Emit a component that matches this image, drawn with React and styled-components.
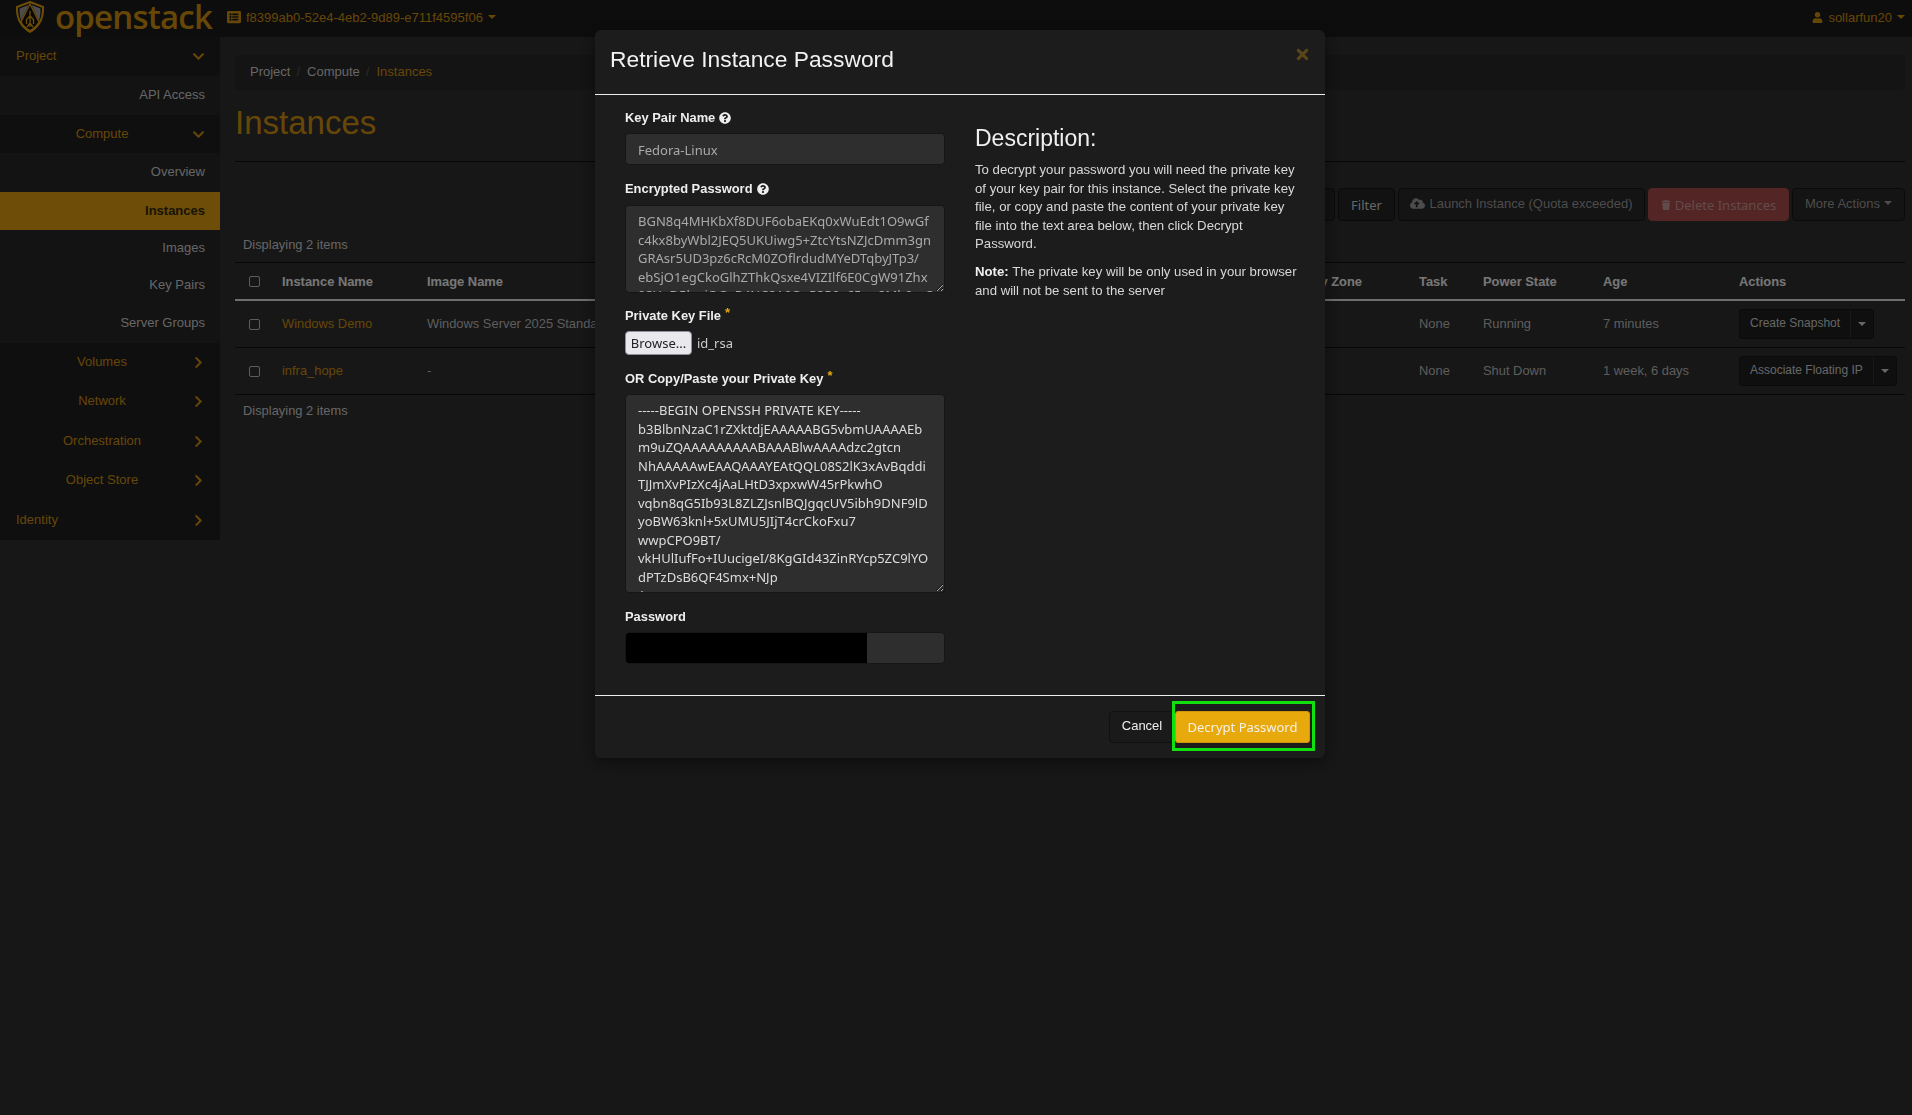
import React from "react";
import styled, { createGlobalStyle } from "styled-components";
import {
  FaChevronDown,
  FaChevronRight,
  FaCloudUploadAlt,
  FaListAlt,
  FaQuestionCircle,
  FaTimes,
  FaTrash,
  FaUser,
} from "react-icons/fa";

const GOLD = "#dc9a10";
const GOLD_TEXT = "#cc8e10";
const COLUMNS = "39px 145px 220px 140px 130px 130px 213px 159px 64px 120px 136px 174px";
const SANS = `"Liberation Sans", Arial, sans-serif`;
const NOTO = `"Noto Sans", "Open Sans", sans-serif`;

const GlobalStyle = createGlobalStyle`
  html, body {
    margin: 0;
    padding: 0;
    height: 100%;
    overflow: hidden;
    background: #2e2e2e;
    font-family: ${SANS};
    font-size: 13px;
  }
  * { box-sizing: border-box; }
`;

const Page = styled.div`
  min-height: 1115px;
  background: #2e2e2e;
  color: #ccc;
`;

const TopBar = styled.header`
  height: 37px;
  background: #1a1a1a;
  display: flex;
  align-items: center;
  padding: 0 7px 3px 0;
`;

const Brand = styled.div`
  width: 225px;
  height: 37px;
  display: flex;
  align-items: center;
  padding-left: 15px;
  gap: 10px;
`;

const BrandName = styled.span`
  font-family: "Open Sans", ${NOTO};
  font-weight: 600;
  font-size: 33px;
  line-height: 37px;
  letter-spacing: -0.8px;
  color: ${GOLD_TEXT};
  position: relative;
  top: -1px;
`;

const NavMenu = styled.div`
  display: flex;
  align-items: center;
  gap: 5px;
  color: ${GOLD_TEXT};
  font-size: 13px;
  margin-left: ${(p) => (p.$end ? "auto" : "2px")};
`;

const Caret = styled.span`
  display: inline-block;
  width: 0;
  height: 0;
  border-top: 4px solid currentColor;
  border-left: 4px solid transparent;
  border-right: 4px solid transparent;
`;

const Layout = styled.div`
  display: flex;
  align-items: flex-start;
`;

const Sidebar = styled.nav`
  width: 220px;
  flex: none;
  background: #1e1e1e;
`;

const NavRow = styled.div`
  height: ${(p) => p.$h || 39}px;
  display: flex;
  align-items: center;
  padding: 0 15px 0 16px;
  background: ${(p) => (p.$active ? GOLD : p.$sub ? "#262626" : "#1e1e1e")};
  color: ${(p) => (p.$active ? "#33280d" : p.$sub ? "#ccc" : GOLD_TEXT)};
  font-weight: ${(p) => (p.$active ? 700 : 400)};
  justify-content: ${(p) => (p.$sub ? "flex-end" : "space-between")};
  font-size: 13px;
`;

const NavLabel = styled.span`
  flex: ${(p) => (p.$center ? 1 : "none")};
  text-align: ${(p) => (p.$center ? "center" : "left")};
  padding-right: ${(p) => (p.$center ? 4 : 0)}px;
  position: relative;
  top: -1px;
`;

const Chevron = styled.span`
  display: flex;
  font-size: 13px;
`;

const Main = styled.main`
  flex: 1;
  min-width: 0;
  padding: 18px 7px 0 15px;
`;

const Breadcrumb = styled.ol`
  list-style: none;
  margin: 0;
  height: 35px;
  padding: 0 0 2px 15px;
  display: flex;
  align-items: center;
  background: #282828;
  border-radius: 4px;
`;

const Crumb = styled.li`
  color: ${(p) => (p.$current ? GOLD_TEXT : "#ccc")};
  margin-right: 7px;
  &:not(:last-child)::after {
    content: "/";
    color: #555;
    margin-left: 6px;
  }
`;

const PageHeader = styled.div`
  height: 72px;
  border-bottom: 1px solid #0e0e0e;
  padding-top: 13px;
`;

const PageTitle = styled.h1`
  margin: 0;
  font-weight: 400;
  font-size: 33px;
  line-height: 39px;
  color: ${GOLD_TEXT};
`;

const Toolbar = styled.div`
  height: 70px;
  padding-top: 26px;
  display: flex;
  justify-content: flex-end;
  gap: 3px;
`;

const ToolButton = styled.div`
  height: 33px;
  width: ${(p) => p.$w}px;
  display: flex;
  align-items: center;
  justify-content: center;
  gap: 4px;
  padding-bottom: ${(p) => (p.$noto ? 0 : 3)}px;
  border: 1px solid ${(p) => (p.$danger ? "#a84646" : "#141414")};
  border-radius: 4px;
  background: ${(p) => (p.$danger ? "#a84a4a" : p.$ghost ? "#282828" : "#242424")};
  color: ${(p) => (p.$danger ? "#c49696" : p.$ghost ? "#999" : "#ccc")};
  font-family: ${(p) => (p.$noto ? NOTO : SANS)};
  font-size: 13px;
`;

const CountRow = styled.div`
  height: 31px;
  padding: 0 0 6px 8px;
  display: flex;
  align-items: center;
  border-bottom: 1px solid #0e0e0e;
  color: #ccc;
  font-size: 12.9px;
`;

const FootCount = styled(CountRow)`
  padding-bottom: 0;
  border-bottom: 0;
`;

const Row = styled.div`
  display: grid;
  grid-template-columns: ${COLUMNS};
  align-items: center;
  height: ${(p) => (p.$head ? 38 : 47)}px;
  border-bottom: ${(p) => (p.$head ? "2px solid #ddd" : "1px solid #0e0e0e")};
`;

const Cell = styled.div`
  padding: 0 0 1px 8px;
  white-space: nowrap;
  overflow: hidden;
  color: ${(p) => (p.$link ? GOLD_TEXT : "#bbb")};
  font-size: 12.9px;
`;

const HeadCell = styled(Cell)`
  color: #eee;
  font-weight: 700;
  padding-bottom: 0;
`;

const CheckCell = styled.div`
  padding-left: 14px;
  display: flex;
`;

const Check = styled.span`
  width: 11px;
  height: 11px;
  border: 1px solid #bbb;
  border-radius: 2px;
  background: #2e2e2e;
`;

const SplitButton = styled.div`
  display: inline-flex;
  height: 30px;
  border: 1px solid #161616;
  border-radius: 3px;
  background: #1f1f1f;
  color: #ccc;
  font-size: 12px;
`;

const SplitLabel = styled.span`
  padding: 0 10px 2px;
  display: flex;
  align-items: center;
  border-right: 1px solid #333;
`;

const SplitCaret = styled.span`
  width: 22px;
  display: flex;
  align-items: center;
  justify-content: center;
`;

const Backdrop = styled.div`
  position: fixed;
  inset: 0;
  background: rgba(0, 0, 0, 0.5);
`;

const Modal = styled.section`
  position: absolute;
  top: 30px;
  left: 595px;
  width: 730px;
  background: #1c1c1c;
  border-radius: 6px;
  box-shadow: 0 4px 14px rgba(0, 0, 0, 0.45);
  color: #e6e6e6;
`;

const ModalHeader = styled.div`
  height: 65px;
  border-bottom: 1px solid #eee;
  padding: 15px 14px 0 15px;
  display: flex;
  justify-content: space-between;
`;

const ModalTitle = styled.h4`
  margin: 0;
  font-weight: 400;
  font-size: 22.8px;
  line-height: 28px;
  color: #f2f2f2;
`;

const CloseIcon = styled.span`
  display: flex;
  color: #5a4519;
  font-size: 17px;
  height: 20px;
  margin-top: 1px;
`;

const ModalBody = styled.div`
  height: 601px;
  display: flex;
  gap: 30px;
  padding: 13px 0 0 30px;
  border-bottom: 1px solid #eee;
`;

const FormColumn = styled.div`
  width: 320px;
  flex: none;
`;

const Field = styled.div`
  margin-bottom: ${(p) => p.$mb || 14}px;
`;

const Label = styled.label`
  display: flex;
  align-items: center;
  gap: 4px;
  height: 19px;
  margin-bottom: ${(p) => p.$mb || 6}px;
  font-weight: 700;
  font-size: 12.9px;
  color: #eee;
`;

const Required = styled.span`
  color: #e6a90c;
  font-size: 13px;
  line-height: 13px;
  position: relative;
  top: -3px;
`;

const HelpIcon = styled.span`
  display: flex;
  font-size: 12px;
  color: #eee;
`;

const TextInput = styled.input`
  display: block;
  width: 100%;
  height: 32px;
  padding: 2px 12px 0;
  background: #2e2e2e;
  border: 1px solid #161616;
  border-radius: 4px;
  color: #aaa;
  font-family: ${NOTO};
  font-size: 13px;
  outline: 0;
`;

const TextArea = styled.textarea`
  display: block;
  width: 100%;
  height: ${(p) => p.$h}px;
  padding: 6px 12px;
  background: #2e2e2e;
  border: 1px solid #161616;
  border-radius: 4px;
  color: ${(p) => (p.$muted ? "#aaa" : "#ddd")};
  font-family: ${NOTO};
  font-size: 13px;
  line-height: 18.5px;
  overflow: hidden;
  white-space: pre;
  outline: 0;
`;

const FileRow = styled.div`
  display: flex;
  align-items: center;
  gap: 5px;
  height: 24px;
  font-family: ${NOTO};
  font-size: 13px;
  color: #ccc;
`;

const BrowseButton = styled.button`
  width: 67px;
  height: 24px;
  padding: 0;
  background: #e9e9ed;
  border: 1px solid #8f8f9d;
  border-radius: 4px;
  color: #222;
  font-family: ${NOTO};
  font-size: 13px;
`;

const PasswordBox = styled.div`
  display: flex;
  height: 32px;
  background: #2e2e2e;
  border: 1px solid #161616;
  border-radius: 4px;
  overflow: hidden;
`;

const Redaction = styled.div`
  width: 241px;
  background: #000;
`;

const Description = styled.div`
  width: 322px;
  padding-top: 17px;
`;

const DescTitle = styled.h3`
  margin: 0 0 10px;
  font-weight: 400;
  font-size: 23px;
  line-height: 26px;
  color: #f0f0f0;
`;

const DescText = styled.p`
  margin: 0 0 9px;
  font-size: 13.2px;
  line-height: 18.6px;
  color: #d8d8d8;
  b { color: #f0f0f0; }
`;

const ModalFooter = styled.div`
  height: 62px;
  padding: 5px 10px 6px 0;
  display: flex;
  justify-content: flex-end;
  align-items: flex-start;
`;

const CancelButton = styled.button`
  width: 66px;
  height: 32px;
  margin-top: 10px;
  padding: 0 0 4px;
  background: #1a1a1a;
  border: 1px solid #111;
  border-radius: 4px;
  color: #eee;
  font-family: ${SANS};
  font-size: 13px;
`;

// green box drawn round the button in the screenshot
const Highlight = styled.div`
  margin-left: -3px;
  height: 50px;
  border: 3px solid #10e010;
  padding: 7px 2px 5px 0;
`;

const DecryptButton = styled.button`
  display: block;
  width: 135px;
  height: 32px;
  padding: 0;
  background: #e8a90c;
  border: 1px solid #cf960a;
  border-radius: 3px;
  color: #f5f1e4;
  font-family: ${NOTO};
  font-size: 13px;
`;

const navItems = [
  { label: "Project", open: true },
  { label: "API Access", sub: true },
  { label: "Compute", open: true, center: true, h: 38 },
  { label: "Overview", sub: true, h: 39 },
  { label: "Instances", sub: true, active: true, h: 38 },
  { label: "Images", sub: true, h: 37 },
  { label: "Key Pairs", sub: true, h: 37 },
  { label: "Server Groups", sub: true, h: 39 },
  { label: "Volumes", center: true },
  { label: "Network", center: true },
  { label: "Orchestration", center: true, h: 40 },
  { label: "Object Store", center: true, h: 39 },
  { label: "Identity", h: 40 },
];

const encrypted = `BGN8q4MHKbXf8DUF6obaEKq0xWuEdt1O9wGf
c4kx8byWbl2JEQ5UKUiwg5+ZtcYtsNZJcDmm3gn
GRAsr5UD3pz6cRcM0ZOflrdudMYeDTqbyJTp3/
ebSjO1egCkoGlhZThkQsxe4VIZIlf6E0CgW91Zhx
0SU+D5bwjOG+R4NC8A9O+P3P0x65sw8Mb0xx3`;

const privateKey = `-----BEGIN OPENSSH PRIVATE KEY-----
b3BlbnNzaC1rZXktdjEAAAAABG5vbmUAAAAEb
m9uZQAAAAAAAAABAAABlwAAAAdzc2gtcn
NhAAAAAwEAAQAAAYEAtQQL08S2lK3xAvBqddi
TJJmXvPIzXc4jAaLHtD3xpxwW45rPkwhO
vqbn8qG5Ib93L8ZLZJsnlBQJgqcUV5ibh9DNF9lD
yoBW63knl+5xUMU5JIjT4crCkoFxu7
wwpCPO9BT/
vkHUlIufFo+IUucigeI/8KgGId43ZinRYcp5ZC9lYO
dPTzDsB6QF4Smx+NJp
/`;

const headers = [
  "Instance Name",
  "Image Name",
  "IP Address",
  "Flavor",
  "Key Pair",
  "Status",
  "Availability Zone",
  "Task",
  "Power State",
  "Age",
  "Actions",
];

const instances = [
  {
    name: "Windows Demo",
    image: "Windows Server 2025 Standard",
    power: "Running",
    age: "7 minutes",
    action: "Create Snapshot",
  },
  {
    name: "infra_hope",
    image: "-",
    power: "Shut Down",
    age: "1 week, 6 days",
    action: "Associate Floating IP",
  },
];

function Logo() {
  return (
    <svg width="30" height="32" viewBox="0 0 30 32" style={{ flex: "none" }}>
      <path d="M15 1 L28 6 C28.500 17 25 25 15 31 C5 25 1.500 17 2 6 Z" fill="#15110a" stroke={GOLD} strokeWidth="2" />
      <path d="M4.500 7.500 L13.500 4 L6 20 C4.700 15 4.400 11 4.500 7.500 Z" fill="#999" />
      <path d="M25.500 7.500 L16.500 4 L24 20 C25.300 15 25.600 11 25.500 7.500 Z" fill="#999" />
      <path
        d="M15 3 L6 21 C8 25 11 27.500 15 29.500 C19 27.500 22 25 24 21 Z M15 10 V26 M15 15 L11.500 18.500 V23 M15 15 L18.500 18.500 V23 M12 26 L15 22 L18 26"
        fill="none"
        stroke={GOLD}
        strokeWidth="1.300"
      />
    </svg>
  );
}

function SideNav() {
  return (
    <Sidebar>
      {navItems.map((item) => (
        <NavRow key={item.label} $sub={item.sub} $active={item.active} $h={item.h}>
          <NavLabel $center={item.center}>{item.label}</NavLabel>
          {!item.sub && <Chevron>{item.open ? <FaChevronDown /> : <FaChevronRight />}</Chevron>}
        </NavRow>
      ))}
    </Sidebar>
  );
}

function InstanceRow({ row }) {
  return (
    <Row>
      <CheckCell><Check /></CheckCell>
      <Cell $link>{row.name}</Cell>
      <Cell>{row.image}</Cell>
      <Cell />
      <Cell />
      <Cell />
      <Cell />
      <Cell />
      <Cell>None</Cell>
      <Cell>{row.power}</Cell>
      <Cell>{row.age}</Cell>
      <Cell>
        <SplitButton>
          <SplitLabel>{row.action}</SplitLabel>
          <SplitCaret><Caret /></SplitCaret>
        </SplitButton>
      </Cell>
    </Row>
  );
}

function PasswordModal() {
  return (
    <Modal>
      <ModalHeader>
        <ModalTitle>Retrieve Instance Password</ModalTitle>
        <CloseIcon><FaTimes /></CloseIcon>
      </ModalHeader>
      <ModalBody>
        <FormColumn>
          <Field>
            <Label>Key Pair Name <HelpIcon><FaQuestionCircle /></HelpIcon></Label>
            <TextInput readOnly defaultValue="Fedora-Linux" />
          </Field>
          <Field $mb={13}>
            <Label $mb={7}>Encrypted Password <HelpIcon><FaQuestionCircle /></HelpIcon></Label>
            <TextArea $h={88} $muted readOnly wrap="off" defaultValue={encrypted} />
          </Field>
          <Field>
            <Label>Private Key File <Required>*</Required></Label>
            <FileRow>
              <BrowseButton type="button">Browse...</BrowseButton>
              id_rsa
            </FileRow>
          </Field>
          <Field>
            <Label>OR Copy/Paste your Private Key <Required>*</Required></Label>
            <TextArea $h={199} readOnly wrap="off" defaultValue={privateKey} />
          </Field>
          <Field>
            <Label>Password</Label>
            <PasswordBox><Redaction /></PasswordBox>
          </Field>
        </FormColumn>
        <Description>
          <DescTitle>Description:</DescTitle>
          <DescText>
            To decrypt your password you will need the private key of your key pair for this
            instance. Select the private key file, or copy and paste the content of your private
            key file into the text area below, then click Decrypt Password.
          </DescText>
          <DescText>
            <b>Note:</b> The private key will be only used in your browser and will not be sent to
            the server
          </DescText>
        </Description>
      </ModalBody>
      <ModalFooter>
        <CancelButton type="button">Cancel</CancelButton>
        <Highlight>
          <DecryptButton type="button">Decrypt Password</DecryptButton>
        </Highlight>
      </ModalFooter>
    </Modal>
  );
}

export default function App() {
  return (
    <Page>
      <GlobalStyle />
      <TopBar>
        <Brand>
          <Logo />
          <BrandName>openstack</BrandName>
        </Brand>
        <NavMenu>
          <FaListAlt size={14} />
          f8399ab0-52e4-4eb2-9d89-e711f4595f06
          <Caret />
        </NavMenu>
        <NavMenu $end>
          <FaUser size={11} />
          sollarfun20
          <Caret />
        </NavMenu>
      </TopBar>
      <Layout>
        <SideNav />
        <Main>
          <Breadcrumb>
            <Crumb>Project</Crumb>
            <Crumb>Compute</Crumb>
            <Crumb $current>Instances</Crumb>
          </Breadcrumb>
          <PageHeader>
            <PageTitle>Instances</PageTitle>
          </PageHeader>
          <Toolbar>
            <ToolButton $w={60} />
            <ToolButton $w={57} $noto>Filter</ToolButton>
            <ToolButton $w={247} $ghost><FaCloudUploadAlt size={15} /> Launch Instance (Quota exceeded)</ToolButton>
            <ToolButton $w={141} $danger $noto><FaTrash size={10} /> Delete Instances</ToolButton>
            <ToolButton $w={113} $ghost>More Actions <Caret /></ToolButton>
          </Toolbar>
          <CountRow>Displaying 2 items</CountRow>
          <Row $head>
            <CheckCell><Check /></CheckCell>
            {headers.map((h) => <HeadCell key={h}>{h}</HeadCell>)}
          </Row>
          {instances.map((row) => <InstanceRow key={row.name} row={row} />)}
          <FootCount>Displaying 2 items</FootCount>
        </Main>
      </Layout>
      <Backdrop>
        <PasswordModal />
      </Backdrop>
    </Page>
  );
}
